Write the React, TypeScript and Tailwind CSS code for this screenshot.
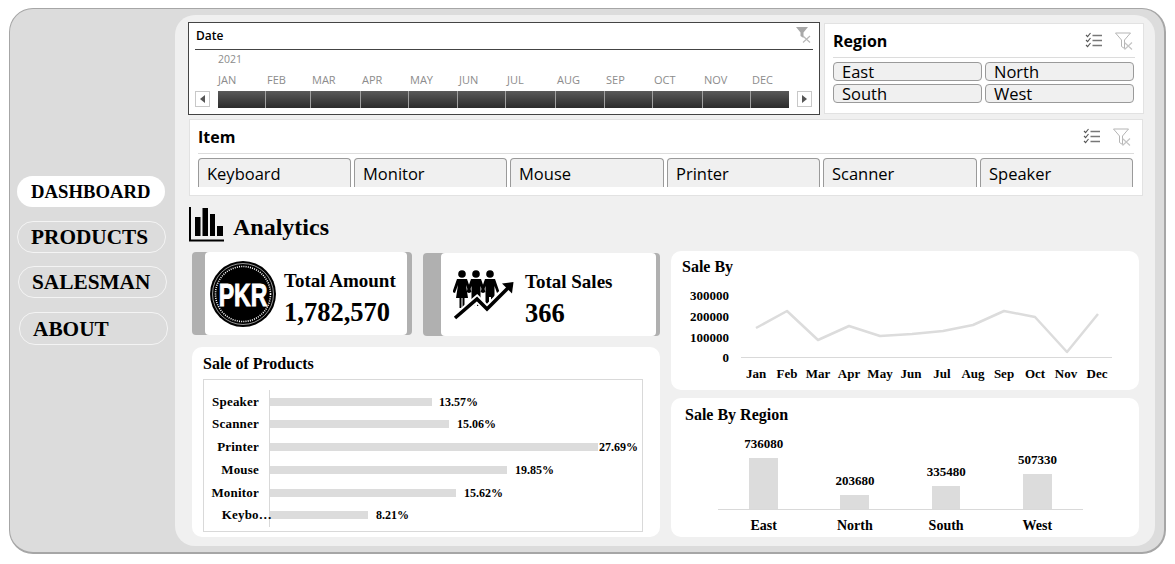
const serif = "font-['Liberation_Serif',serif] font-bold text-black";
const ui = "font-['Open_Sans',sans-serif]";

const months = [
  { name: "JAN", w: "w-[48px]" },
  { name: "FEB", w: "w-[45px]" },
  { name: "MAR", w: "w-[50px]" },
  { name: "APR", w: "w-[48px]" },
  { name: "MAY", w: "w-[49px]" },
  { name: "JUN", w: "w-[48px]" },
  { name: "JUL", w: "w-[50px]" },
  { name: "AUG", w: "w-[49px]" },
  { name: "SEP", w: "w-[48px]" },
  { name: "OCT", w: "w-[50px]" },
  { name: "NOV", w: "w-[48px]" },
  { name: "DEC", w: "w-[38px]" },
];

const items = [
  { name: "Keyboard", w: "w-[153px]" },
  { name: "Monitor", w: "w-[153px]" },
  { name: "Mouse", w: "w-[154px]" },
  { name: "Printer", w: "w-[153px]" },
  { name: "Scanner", w: "w-[154px]" },
  { name: "Speaker", w: "w-[153px]" },
];

const products = [
  { name: "Speaker", bar: "w-[162px]", pct: "13.57%", gap: "ml-[7px]" },
  { name: "Scanner", bar: "w-[179px]", pct: "15.06%", gap: "ml-[8px]" },
  { name: "Printer", bar: "w-[328px]", pct: "27.69%", gap: "ml-[1px]" },
  { name: "Mouse", bar: "w-[237px]", pct: "19.85%", gap: "ml-[8px]" },
  { name: "Monitor", bar: "w-[186px]", pct: "15.62%", gap: "ml-[8px]" },
];

const regions = [
  { name: "East", value: "736080", bar: "h-[51px] w-[29px]" },
  { name: "North", value: "203680", bar: "h-[14px] w-[29px]" },
  { name: "South", value: "335480", bar: "h-[23px] w-[28px]" },
  { name: "West", value: "507330", bar: "h-[35px] w-[29px]" },
];

const linePoints = "85,50 116,33 147,62 178,48 209,58 241,56 272,53 302,47 333,33 364,39 396,74 427,36";
const lineMonths = [
  ["Jan", 85], ["Feb", 116], ["Mar", 147], ["Apr", 178], ["May", 209], ["Jun", 240],
  ["Jul", 271], ["Aug", 302], ["Sep", 333], ["Oct", 364], ["Nov", 395], ["Dec", 426],
] as const;

const ChecklistIcon = () => (
  <svg width="18" height="17" viewBox="0 0 18 17" fill="none" stroke="#555" strokeWidth="1.1">
    <path d="M1 3l1.6 1.6L5.5 1M1 8l1.6 1.6L5.5 6M1 13l1.6 1.6L5.5 11" />
    <path d="M7.5 3.5H17M7.5 8.500H17M7.5 13.500H17" stroke="#777" strokeWidth="1.4" />
  </svg>
);

const FilterClearIcon = () => (
  <svg width="18" height="18" viewBox="0 0 18 18" fill="none">
    <path d="M0.500 1H15.500L9.500 8V16.500L6.500 14.500V8Z" stroke="#b5b5b5" strokeWidth="1" />
    <path d="M9.500 10.500L17 17.500M17 10.500L9.500 17.500" stroke="#c4c4c4" strokeWidth="1.200" />
  </svg>
);

const TimelineFilterIcon = () => (
  <svg width="16" height="16" viewBox="0 0 16 16">
    <path d="M0 0H12L7.500 5.500V11L4.500 9V5.500Z" fill="#a8a8a8" />
    <path d="M7 9L14 15.500M14 9L7 15.500" stroke="#b8b8b8" strokeWidth="1.200" />
  </svg>
);

const AnalyticsIcon = () => (
  <svg width="36" height="36" viewBox="0 0 36 36" className="block">
    <path d="M1 1V34.500H35" fill="none" stroke="#000" strokeWidth="2" />
    <rect x="6" y="11" width="5.500" height="19" />
    <rect x="13.500" y="2" width="5.500" height="28" />
    <rect x="21" y="8" width="5" height="22" />
    <rect x="28" y="20" width="6" height="10" />
  </svg>
);

const PkrIcon = () => (
  <svg width="66" height="66" viewBox="0 0 66 66" className="block shrink-0">
    <circle cx="33" cy="33" r="33" fill="#000" />
    <circle cx="33" cy="33" r="30.500" fill="none" stroke="#fff" strokeWidth="0.600" />
    <circle cx="33" cy="33" r="27.500" fill="none" stroke="#fff" strokeWidth="1.600" strokeDasharray="1 1.200" />
    <text
      transform="translate(33 44.500) scale(0.72 1)"
      textAnchor="middle"
      fill="#fff"
      stroke="#fff"
      strokeWidth="1"
      fontFamily="Liberation Sans, sans-serif"
      fontWeight="700"
      fontSize="32"
    >
      PKR
    </text>
  </svg>
);

const Person = ({ x, skirt }: { x: number; skirt?: boolean }) => (
  <g transform={`translate(${x} 0)`}>
    <circle cx="0" cy="6" r="3.800" />
    {skirt ? (
      <path d="M-5 11H5L9.500 24L7 25L4 17L6 30H2.500V40H0.500V30H-0.500V40H-2.500V30H-6L-4 17L-7 25L-9.500 24Z" />
    ) : (
      <path d="M-5 11H5L9.500 24L7 25L4.500 18V38H1V29H-1V38H-4.500V18L-7 25L-9.500 24Z" />
    )}
  </g>
);

const PeopleIcon = () => (
  <svg width="62" height="53" viewBox="0 0 62 53" className="block shrink-0">
    <Person x={9} skirt />
    <Person x={23} />
    <Person x={37} />
    <path d="M2 50L24 31L34 41L56 18" fill="none" stroke="#fff" strokeWidth="7.500" />
    <path d="M2 50L24 31L34 41L56 19" fill="none" stroke="#000" strokeWidth="3.600" />
    <path d="M49 15.500L60.500 14L59 25.500Z" />
  </svg>
);

const NavButton = ({ label, className }: { label: string; className: string }) => (
  <div className={`flex items-center rounded-[16px] pt-[2px] ${serif} ${className}`}>{label}</div>
);

const Sidebar = () => (
  <aside className="w-[165px] shrink-0 pt-[161px]">
    <NavButton label="DASHBOARD" className="ml-[7px] h-[31px] w-[148px] bg-white pl-[14px] text-[18.7px]" />
    <NavButton label="PRODUCTS" className="ml-[7px] mt-[14px] h-[32px] w-[149px] border border-[#f4f4f4] pl-[13px] text-[21.3px]" />
    <NavButton label="SALESMAN" className="ml-[8px] mt-[13px] h-[32px] w-[149px] border border-[#f4f4f4] pl-[13px] text-[21.3px]" />
    <NavButton label="ABOUT" className="ml-[9px] mt-[14px] h-[33px] w-[149px] border border-[#f4f4f4] pl-[13px] text-[21.3px]" />
  </aside>
);

const DateSlicer = () => (
  <section className={`relative h-[93px] w-[632px] shrink-0 border border-[#444] bg-white px-[6px] pt-[4px] ${ui}`}>
    <div className="h-[23px] border-b border-[#444] pl-[1px] text-[12px] font-semibold leading-[18px] text-black">Date</div>
    <div className="absolute right-[7px] top-[4px]">
      <TimelineFilterIcon />
    </div>
    <div className="ml-[23px] mt-[2px] text-[10.500px] leading-[14px] text-[#8c8c8c]">2021</div>
    <div className="ml-[23px] mt-[7px] flex h-[14px] text-[11px] leading-[14px] text-[#8c8c8c]">
      {months.map((m, i) => (
        <div key={m.name} className={`${m.w} shrink-0 ${i > 0 ? "pl-[1px]" : ""}`}>{m.name}</div>
      ))}
    </div>
    <div className="mt-[4px] flex items-start">
      <div className="flex h-[16px] w-[15px] items-center justify-center border border-[#c8c8c8] bg-white">
        <div className="h-0 w-0 border-y-[4px] border-r-[5px] border-y-transparent border-r-[#555]" />
      </div>
      <div className="ml-[8px] flex h-[17px] w-[571px] bg-gradient-to-b from-[#5a5a5a] to-[#2c2c2c]">
        {months.map((m, i) => (
          <div key={m.name} className={`${m.w} shrink-0 ${i < 11 ? "border-r border-[#a0a0a0]" : ""}`} />
        ))}
      </div>
      <div className="ml-[8px] flex h-[16px] w-[15px] items-center justify-center border border-[#c8c8c8] bg-white">
        <div className="h-0 w-0 border-y-[4px] border-l-[5px] border-y-transparent border-l-[#555]" />
      </div>
    </div>
  </section>
);

const SlicerHeader = ({ title, className }: { title: string; className: string }) => (
  <div className={`flex h-[29px] items-center justify-between border-b border-[#dcdcdc] pb-[5px] ${className}`}>
    <span className="text-[16px] font-bold leading-[22px] text-black">{title}</span>
    <div className="flex items-center gap-[12px]">
      <ChecklistIcon />
      <FilterClearIcon />
    </div>
  </div>
);

const RegionSlicer = () => (
  <section className={`mt-[1px] h-[91px] w-[320px] shrink-0 border border-[#e2e2e2] bg-white px-[8px] pt-[5px] ${ui}`}>
    <SlicerHeader title="Region" className="pr-[2px]" />
    <div className="mt-[4px] grid w-[301px] grid-cols-[149px_149px] gap-x-[3px] gap-y-[3px]">
      {["East", "North", "South", "West"].map((r) => (
        <div key={r} className="h-[19px] rounded-[4px] border border-[#9a9a9a] bg-[#f0f0f0] pl-[8px] text-[16.500px] leading-[18px] text-black">
          {r}
        </div>
      ))}
    </div>
  </section>
);

const ItemSlicer = () => (
  <section className={`ml-[1px] mt-[4px] h-[77px] w-[954px] border border-[#e2e2e2] bg-white px-[8px] pt-[5px] ${ui}`}>
    <SlicerHeader title="Item" className="pr-[3px]" />
    <div className="mt-[4px] flex h-[29px] gap-[3px]">
      {items.map((it) => (
        <div key={it.name} className={`${it.w} h-[29px] shrink-0 rounded-t-[4px] border border-b-0 border-[#9a9a9a] bg-[#f0f0f0] pl-[8px] text-[16.500px] leading-[29px] text-black`}>
          {it.name}
        </div>
      ))}
    </div>
  </section>
);

const KpiCard = ({
  className,
  bodyClassName,
  icon,
  title,
  value,
  textClassName,
}: {
  className: string;
  bodyClassName: string;
  icon: React.ReactNode;
  title: string;
  value: string;
  textClassName: string;
}) => (
  <div className={`flex rounded-[4px] bg-[#b0b0b0] ${className}`}>
    <div className={`flex items-center rounded-[4px] bg-white ${bodyClassName}`}>
      {icon}
      <div className={`pt-[9px] ${serif} ${textClassName}`}>
        <div className="text-[19px] leading-[22px]">{title}</div>
        <div className="mt-[5px] text-[26.500px] leading-[30px]">{value}</div>
      </div>
    </div>
  </div>
);

const ProductsCard = () => (
  <div className={`mt-[12px] h-[190px] w-[468px] rounded-[10px] bg-white px-[11px] pt-[7px] ${serif}`}>
    <div className="h-[25px] text-[16px] leading-[20px]">Sale of Products</div>
    <div className="h-[153px] w-[440px] border border-[#d9d9d9] pb-[4px] pl-[65px] pt-[10px]">
      <div className="flex h-full flex-col justify-between border-l border-[#d9d9d9] py-[4.500px] text-[12px] leading-[14px]">
        {products.map((p) => (
          <div key={p.name} className="relative flex items-center">
            <span className="absolute right-[100%] mr-[11px] text-[13px] tracking-[0.2px]">{p.name}</span>
            <div className={`h-[8px] bg-[#dcdcdc] ${p.bar}`} />
            <span className={p.gap}>{p.pct}</span>
          </div>
        ))}
        <div className="relative flex items-center">
          <span className="absolute right-[100%] mr-[-2px] text-[13px] tracking-[0.2px]">Keybo…</span>
          <div className="h-[8px] w-[98px] bg-[#dcdcdc]" />
          <span className="ml-[8px]">8.21%</span>
        </div>
      </div>
    </div>
  </div>
);

const LineCard = () => (
  <div className={`h-[139px] w-[468px] rounded-[10px] bg-white pt-[6px] ${serif}`}>
    <div className="ml-[11px] h-[21px] text-[16px] leading-[20px]">Sale By</div>
    <svg width="468" height="112" viewBox="0 0 468 112" className="block">
      <g fontFamily="Liberation Serif, serif" fontWeight="700" fontSize="13" fill="#000" textAnchor="end">
        <text x="58" y="21.500">300000</text>
        <text x="58" y="42.500">200000</text>
        <text x="58" y="63.500">100000</text>
        <text x="58" y="84">0</text>
      </g>
      <polyline points={linePoints} fill="none" stroke="#dcdcdc" strokeWidth="2.500" strokeLinejoin="round" />
      <line x1="70" y1="79.500" x2="441" y2="79.500" stroke="#d9d9d9" />
      <g fontFamily="Liberation Serif, serif" fontWeight="700" fontSize="13" fill="#000" textAnchor="middle">
        {lineMonths.map(([m, x]) => (
          <text key={m} x={x} y="100">{m}</text>
        ))}
      </g>
    </svg>
  </div>
);

const RegionCard = () => (
  <div className={`mt-[8px] h-[139px] w-[468px] rounded-[10px] bg-white pt-[7px] ${serif}`}>
    <div className="ml-[14px] h-[20px] text-[16px] leading-[20px]">Sale By Region</div>
    <div className="ml-[47px] mt-[11px] grid h-[74px] w-[365px] grid-cols-4 items-end border-b border-[#d9d9d9]">
      {regions.map((r) => (
        <div key={r.name} className="flex flex-col items-center">
          <div className="mb-[7px] text-[13px] leading-[14px]">{r.value}</div>
          <div className={`bg-[#dcdcdc] ${r.bar}`} />
        </div>
      ))}
    </div>
    <div className="ml-[47px] mt-[8px] grid w-[365px] grid-cols-4 text-center text-[14px] leading-[16px]">
      {regions.map((r) => (
        <div key={r.name}>{r.name}</div>
      ))}
    </div>
  </div>
);

export default function App() {
  return (
    <div className="h-[564px] w-[1175px] overflow-hidden bg-white pl-[9px] pt-[8px]">
      <div className="flex h-[546px] w-[1157px] rounded-[24px] border border-b-2 border-r-2 border-[#a6a6a6] bg-[#dcdcdc] pt-[6px]">
        <Sidebar />
        <main className="h-[531px] w-[980px] rounded-[20px] bg-[#f0f0f0] pl-[13px] pt-[7px]">
          <div className="flex gap-[4px]">
            <DateSlicer />
            <RegionSlicer />
          </div>
          <ItemSlicer />
          <div className="ml-[1px] mt-[9px] flex h-[37px] items-center">
            <AnalyticsIcon />
            <span className={`ml-[8px] mt-[6px] text-[24px] leading-[30px] ${serif}`}>Analytics</span>
          </div>
          <div className="mt-[9px] flex">
            <div className="ml-[4px] w-[468px] pt-[1px]">
              <div className="flex h-[83px]">
                <KpiCard
                  className="h-[83px] w-[220px] pl-[13px] pr-[5px]"
                  bodyClassName="w-[202px] pl-[5px]"
                  icon={<PkrIcon />}
                  title="Total Amount"
                  value="1,782,570"
                  textClassName="ml-[8px]"
                />
                <KpiCard
                  className="ml-[11px] mt-[1px] h-[83px] w-[237px] pl-[18px] pr-[4px]"
                  bodyClassName="w-[215px] pl-[12px]"
                  icon={<PeopleIcon />}
                  title="Total Sales"
                  value="366"
                  textClassName="ml-[10px]"
                />
              </div>
              <ProductsCard />
            </div>
            <div className="ml-[11px] w-[468px]">
              <LineCard />
              <RegionCard />
            </div>
          </div>
        </main>
      </div>
    </div>
  );
}
